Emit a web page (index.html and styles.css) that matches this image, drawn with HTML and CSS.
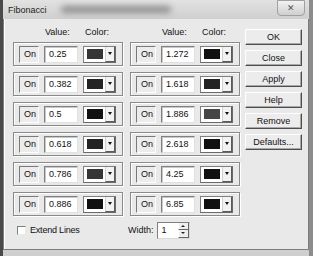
FILE: index.html
```html
<!DOCTYPE html>
<html lang="en">
<head>
    <meta charset="UTF-8">
    <title>Fibonacci</title>
    <link rel="stylesheet" href="styles.css">
</head>
<body>
    <div class="window">
        <div class="titlebar">
            <span class="title">Fibonacci</span>
            <span class="smudge"></span>
            <span class="close">&#x2715;</span>
        </div>
        <div class="dialog">
            <div class="main">
                <div class="levels">
                    <div class="column">
                        <div class="heads"><span class="h-value">Value:</span><span class="h-color">Color:</span></div>
                        <div class="level"><span class="on">On</span><span class="edit">0.25</span><span class="combo"><i class="swatch c3"></i><b class="drop"></b></span></div>
                        <div class="level"><span class="on">On</span><span class="edit">0.382</span><span class="combo"><i class="swatch c2"></i><b class="drop"></b></span></div>
                        <div class="level"><span class="on">On</span><span class="edit">0.5</span><span class="combo"><i class="swatch c1"></i><b class="drop"></b></span></div>
                        <div class="level"><span class="on">On</span><span class="edit">0.618</span><span class="combo"><i class="swatch c2"></i><b class="drop"></b></span></div>
                        <div class="level"><span class="on">On</span><span class="edit">0.786</span><span class="combo"><i class="swatch c3"></i><b class="drop"></b></span></div>
                        <div class="level"><span class="on">On</span><span class="edit">0.886</span><span class="combo"><i class="swatch c1"></i><b class="drop"></b></span></div>
                    </div>
                    <div class="column">
                        <div class="heads"><span class="h-value">Value:</span><span class="h-color">Color:</span></div>
                        <div class="level"><span class="on">On</span><span class="edit">1.272</span><span class="combo"><i class="swatch c1"></i><b class="drop"></b></span></div>
                        <div class="level"><span class="on">On</span><span class="edit">1.618</span><span class="combo"><i class="swatch c2"></i><b class="drop"></b></span></div>
                        <div class="level"><span class="on">On</span><span class="edit">1.886</span><span class="combo"><i class="swatch c4"></i><b class="drop"></b></span></div>
                        <div class="level"><span class="on">On</span><span class="edit">2.618</span><span class="combo"><i class="swatch c1"></i><b class="drop"></b></span></div>
                        <div class="level"><span class="on">On</span><span class="edit">4.25</span><span class="combo"><i class="swatch c1"></i><b class="drop"></b></span></div>
                        <div class="level"><span class="on">On</span><span class="edit">6.85</span><span class="combo"><i class="swatch c1"></i><b class="drop"></b></span></div>
                    </div>
                </div>
                <div class="footer">
                    <label class="check"><span class="box"></span>Extend Lines</label>
                    <span class="width-label">Width:</span>
                    <span class="spinner"><span class="spin-value">1</span><span class="spin-btns"><b class="up"></b><b class="down"></b></span></span>
                </div>
            </div>
            <div class="buttons">
                <span class="btn">OK</span>
                <span class="btn">Close</span>
                <span class="btn">Apply</span>
                <span class="btn">Help</span>
                <span class="btn">Remove</span>
                <span class="btn">Defaults...</span>
            </div>
        </div>
    </div>
</body>
</html>
```

FILE: styles.css
```css
body {
    margin: 0;
    background: #b9b9b9;
    font-family: "Liberation Sans", Arial, sans-serif;
    font-size: 9px;
    color: #111;
}
.window {
    width: 313px;
    height: 256px;
    box-sizing: border-box;
    display: flex;
    flex-direction: column;
    background: #cfcfcf;
    border-left: 3px solid #4a4a4a;
    border-right: 4px solid #8c8c8c;
    overflow: hidden;
}
.titlebar {
    height: 19px;
    display: flex;
    align-items: center;
    padding-left: 5px;
    background: linear-gradient(#e2e2e2, #cfcfcf);
}
.title {
    font-size: 9px;
    color: #222;
}
.smudge {
    width: 110px;
    height: 7px;
    margin-left: 14px;
    background: #8e8e8e;
    border-radius: 4px;
    filter: blur(3px);
}
.close {
    margin-left: auto;
    margin-right: 4px;
    width: 26px;
    height: 14px;
    margin-top: -4px;
    border: 1px solid #a0a0a0;
    border-radius: 0 0 4px 4px;
    background: linear-gradient(#f2f2f2, #cfcfcf);
    text-align: center;
    font-size: 9px;
    line-height: 14px;
    color: #555;
}
.dialog {
    flex: 1;
    display: flex;
    background: #e9e9e9;
    border: 1px solid #7c7c7c;
    border-top: none;
    margin-bottom: 6px;
    box-shadow: inset 1px 0 0 #fff;
}
.main {
    display: flex;
    flex-direction: column;
    padding: 8px 0 0 9px;
}
.levels {
    display: flex;
    gap: 7px;
}
.column {
    width: 110px;
    display: flex;
    flex-direction: column;
    gap: 6px;
}
.heads {
    height: 9px;
    display: flex;
    padding-left: 32px;
}
.h-value {
    width: 40px;
}
.level {
    height: 22px;
    display: flex;
    align-items: center;
    gap: 5px;
    padding: 0 3px 0 5px;
    border: 1px solid #8a8a8a;
    box-shadow: inset 1px 1px 0 #fff, 1px 1px 0 #fff;
}
.on {
    flex: none;
    width: 20px;
    height: 17px;
    box-sizing: border-box;
    line-height: 15px;
    padding-left: 4px;
    border: 1px solid;
    border-color: #7a7a7a #fff #fff #7a7a7a;
    background: #ececec;
}
.edit {
    flex: none;
    width: 34px;
    height: 17px;
    box-sizing: border-box;
    line-height: 14px;
    padding-left: 4px;
    background: #fff;
    border: 1px solid;
    border-color: #808080 #e0e0e0 #e0e0e0 #808080;
    box-shadow: inset 1px 1px 0 #c8c8c8;
}
.combo {
    flex: none;
    width: 33px;
    height: 17px;
    box-sizing: border-box;
    display: flex;
    align-items: center;
    padding-left: 3px;
    background: #fff;
    border: 1px solid;
    border-color: #808080 #6a6a6a #6a6a6a #808080;
}
.swatch {
    width: 16px;
    height: 10px;
    background: #111;
}
.c1 { background: #111; }
.c2 { background: #232323; }
.c3 { background: #353535; }
.c4 { background: #464646; }
.drop {
    margin-left: auto;
    width: 10px;
    height: 15px;
    box-sizing: border-box;
    border-left: 1px solid #d0d0d0;
    border-right: 1px solid #5a5a5a;
    border-bottom: 1px solid #5a5a5a;
    background: #f2f2f2;
    display: flex;
    align-items: center;
    justify-content: center;
}
.drop::after {
    content: "";
    border-left: 2.5px solid transparent;
    border-right: 2.5px solid transparent;
    border-top: 3px solid #111;
}
.footer {
    display: flex;
    align-items: center;
    height: 22px;
    margin-top: 3px;
    padding-left: 4px;
}
.check {
    display: flex;
    align-items: center;
    gap: 4px;
    width: 111px;
    letter-spacing: -0.2px;
}
.box {
    width: 7px;
    height: 7px;
    background: #fff;
    border: 1px solid;
    border-color: #808080 #e8e8e8 #e8e8e8 #808080;
}
.width-label {
    margin-right: 3px;
}
.spinner {
    width: 33px;
    height: 17px;
    box-sizing: border-box;
    display: flex;
    background: #fff;
    border: 1px solid;
    border-color: #808080 #d8d8d8 #d8d8d8 #808080;
}
.spin-value {
    padding-left: 4px;
    line-height: 15px;
}
.spin-btns {
    margin-left: auto;
    width: 11px;
    display: flex;
    flex-direction: column;
}
.spin-btns b {
    flex: 1;
    display: flex;
    align-items: center;
    justify-content: center;
    background: #eeeeee;
    border-right: 1px solid #666;
    border-bottom: 1px solid #666;
    border-left: 1px solid #fff;
}
.up::after {
    content: "";
    border-left: 2px solid transparent;
    border-right: 2px solid transparent;
    border-bottom: 2px solid #222;
}
.down::after {
    content: "";
    border-left: 2px solid transparent;
    border-right: 2px solid transparent;
    border-top: 2px solid #222;
}
.buttons {
    display: flex;
    flex-direction: column;
    gap: 5px;
    padding-top: 10px;
    margin-left: 5px;
}
.btn {
    width: 57px;
    height: 16px;
    box-sizing: border-box;
    text-align: center;
    line-height: 14px;
    background: #ececec;
    border: 1px solid;
    border-color: #fff #4e4e4e #4e4e4e #fff;
    box-shadow: inset -1px -1px 0 #a8a8a8;
}
```
